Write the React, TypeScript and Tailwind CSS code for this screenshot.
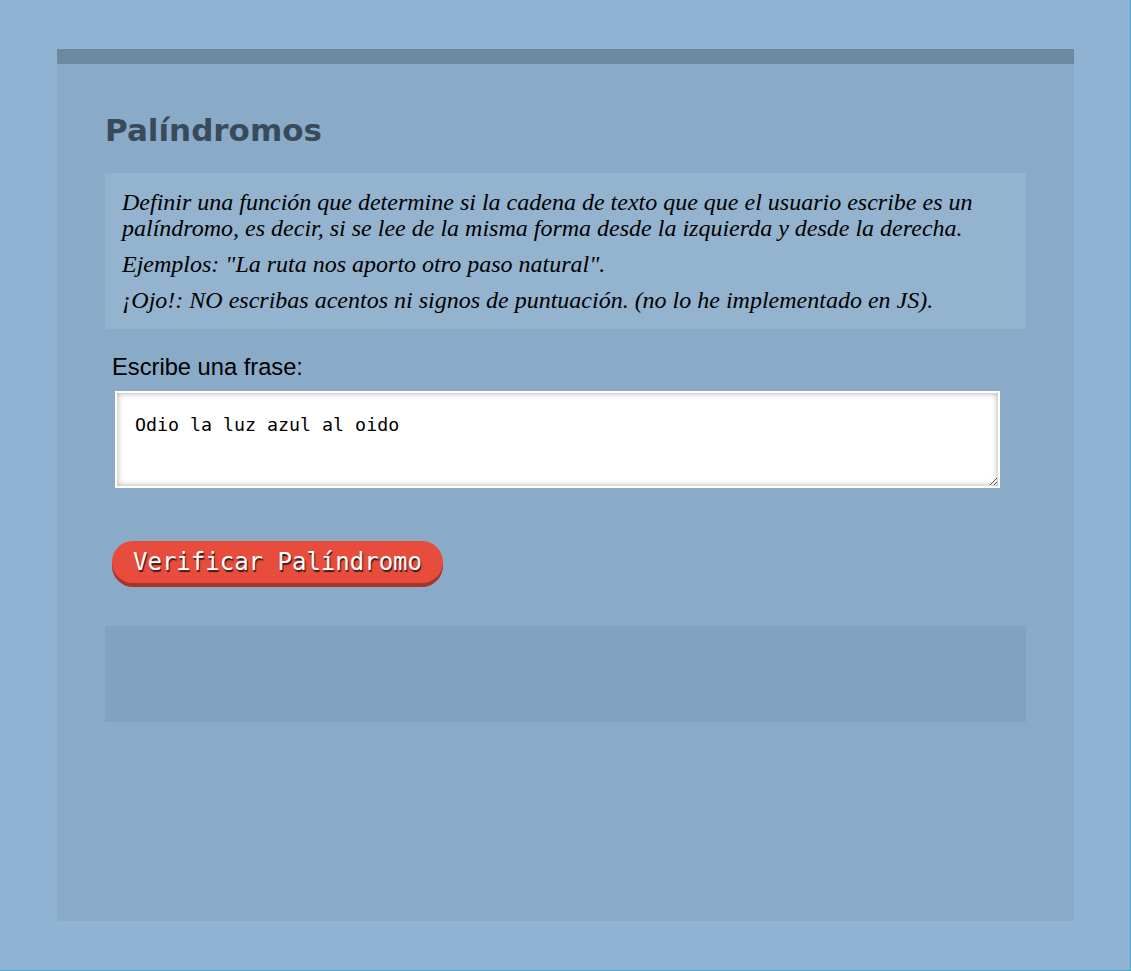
import { useState } from "react";

export default function App() {
  const [frase, setFrase] = useState("Odio la luz azul al oido");
  const [resultado, setResultado] = useState("");

  const verificar = () => {
    const limpia = frase.toLowerCase().replace(/\s+/g, "");
    const alReves = limpia.split("").reverse().join("");
    setResultado(
      limpia === alReves
        ? `"${frase}" es un palíndromo.`
        : `"${frase}" no es un palíndromo.`
    );
  };

  return (
    <div className="w-[1131px] h-[971px] bg-[#90b3d3] border-r border-b border-[#4aa8d0] pt-[49px] pl-[57px]">
      <div className="w-[1017px] h-[872px] bg-[#89abc8] flex flex-col">
        <div className="h-[15px] bg-[#6d89a0]" />
        <div className="px-[48px] flex flex-col">
          <h1 className="mt-[48px] h-[36px] leading-[36px] text-[31px] font-bold text-[#394a5a] font-['DejaVu_Sans',sans-serif]">
            Palíndromos
          </h1>

          <div className="mt-[25px] h-[156px] bg-[#93b3ce] px-[17px] pt-[16px] font-['Liberation_Serif',serif] italic text-[24px] leading-[26px] text-black flex flex-col gap-[10px]">
            <p>
              Definir una función que determine si la cadena de texto que que el
              usuario escribe es un palíndromo, es decir, si se lee de la misma
              forma desde la izquierda y desde la derecha.
            </p>
            <p>Ejemplos: "La ruta nos aporto otro paso natural".</p>
            <p>¡Ojo!: NO escribas acentos ni signos de puntuación. (no lo he implementado en JS).</p>
          </div>

          <label className="mt-[24px] ml-[7px] h-[28px] leading-[28px] text-[23.7px] text-black font-['Liberation_Sans',sans-serif]">
            Escribe una frase:
          </label>

          <textarea
            value={frase}
            onChange={(e) => setFrase(e.target.value)}
            className="mt-[10px] ml-[10px] w-[885px] h-[97px] bg-white border-2 border-white shadow-[inset_0_0_6px_rgba(0,0,0,0.35)] px-[18px] pt-[20px] text-[18.3px] leading-[24px] text-black font-['DejaVu_Sans_Mono',monospace] outline-none"
          />

          <div className="mt-[53px] ml-[7px]">
            <button
              onClick={verificar}
              className="h-[42px] px-[21px] rounded-full bg-[#e74c3c] shadow-[0_4px_0_#a8342a] text-white text-[24px] leading-[42px] font-['DejaVu_Sans_Mono',monospace] [text-shadow:1px_2px_1px_rgba(40,20,20,0.9)]"
            >
              Verificar Palíndromo
            </button>
          </div>

          <div className="mt-[43px] h-[96px] bg-[#82a2bf] px-[17px] pt-[16px] text-[20px] text-black font-['Liberation_Sans',sans-serif]">
            {resultado}
          </div>
        </div>
      </div>
    </div>
  );
}
